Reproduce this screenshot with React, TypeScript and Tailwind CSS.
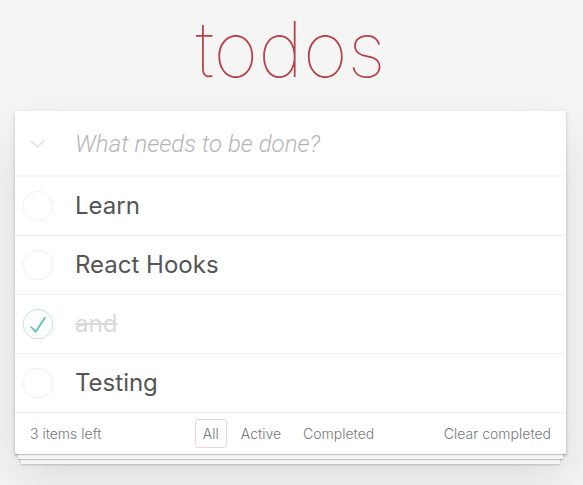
import { useState } from "react";

type Todo = { id: number; title: string; done: boolean };

const initialTodos: Todo[] = [
  { id: 1, title: "Learn", done: false },
  { id: 2, title: "React Hooks", done: false },
  { id: 3, title: "and", done: true },
  { id: 4, title: "Testing", done: false },
];

const Toggle = ({ done }: { done: boolean }) => (
  <svg width="40" height="40" viewBox="-10 -18 100 135" className="shrink-0">
    <circle
      cx="50"
      cy="50"
      r="50"
      fill="none"
      stroke={done ? "#bddad5" : "#ededed"}
      strokeWidth="3"
    />
    {done && <path fill="#5dc2af" d="M72 25L42 71 27 56l-4 4 20 20 34-52z" />}
  </svg>
);

const App = () => {
  const [todos] = useState<Todo[]>(initialTodos);
  const left = todos.filter((t) => !t.done).length;

  return (
    <div
      className="min-h-screen bg-[#f5f5f5] text-[#4d4d4d] font-light"
      style={{ fontFamily: "Inter, 'Liberation Sans', sans-serif" }}
    >
      <div className="w-[551px] mx-auto pt-[3px] -translate-x-[1px]">
        <h1 className="text-center text-[77px] leading-[1.2] font-thin text-[#b83f45] h-[92px] mb-[16px]">
          todos
        </h1>

        <section className="bg-white shadow-[0_2px_4px_0_rgba(0,0,0,0.2),0_25px_50px_0_rgba(0,0,0,0.1)]">
          <div className="flex items-center h-[66px] shadow-[inset_0_-2px_1px_rgba(0,0,0,0.03)]">
            <div className="w-[60px] flex justify-center">
              <svg width="17" height="10" viewBox="0 0 17 10" className="-ml-[15px]">
                <polyline
                  points="1.5,1.5 8.5,8 15.5,1.5"
                  fill="none"
                  stroke="#e6e6e6"
                  strokeWidth="2"
                />
              </svg>
            </div>
            <div
              className="text-2xl italic font-light text-[#b5b5b5]"
              style={{ fontFamily: "Roboto, 'Liberation Sans', sans-serif" }}
            >
              What needs to be done?
            </div>
          </div>

          <ul>
            {todos.map((todo) => (
              <li
                key={todo.id}
                className="flex items-center h-[59px] border-b border-[#ededed]"
              >
                <Toggle done={todo.done} />
                <span
                  className={
                    todo.done
                      ? "ml-5 text-2xl font-normal leading-[1.2] line-through text-[#d9d9d9]"
                      : "ml-5 text-2xl font-normal leading-[1.2] text-[#555]"
                  }
                >
                  {todo.title}
                </span>
              </li>
            ))}
          </ul>

          <footer className="relative h-[41px] px-[15px] text-[14px] text-[#777] grid grid-cols-[1fr_auto_1fr] items-center">
            <div className="absolute left-0 right-0 bottom-0 h-[50px] overflow-hidden pointer-events-none shadow-[0_1px_1px_rgba(0,0,0,0.2),0_8px_0_-3px_#f6f6f6,0_9px_1px_-3px_rgba(0,0,0,0.2),0_16px_0_-6px_#f6f6f6,0_17px_2px_-6px_rgba(0,0,0,0.2)]" />
            <span className="relative justify-self-start">{left} items left</span>
            <ul className="relative flex -ml-[4px]">
              <li className="mx-[3px] px-[7px] py-[3px] border border-[rgba(175,47,47,0.2)] rounded-[3px]">All</li>
              <li className="mx-[3px] px-[7px] py-[3px] border border-transparent">Active</li>
              <li className="mx-[3px] px-[7px] py-[3px] border border-transparent">Completed</li>
            </ul>
            <span className="relative justify-self-end">Clear completed</span>
          </footer>
        </section>
      </div>
    </div>
  );
};

export default App;
